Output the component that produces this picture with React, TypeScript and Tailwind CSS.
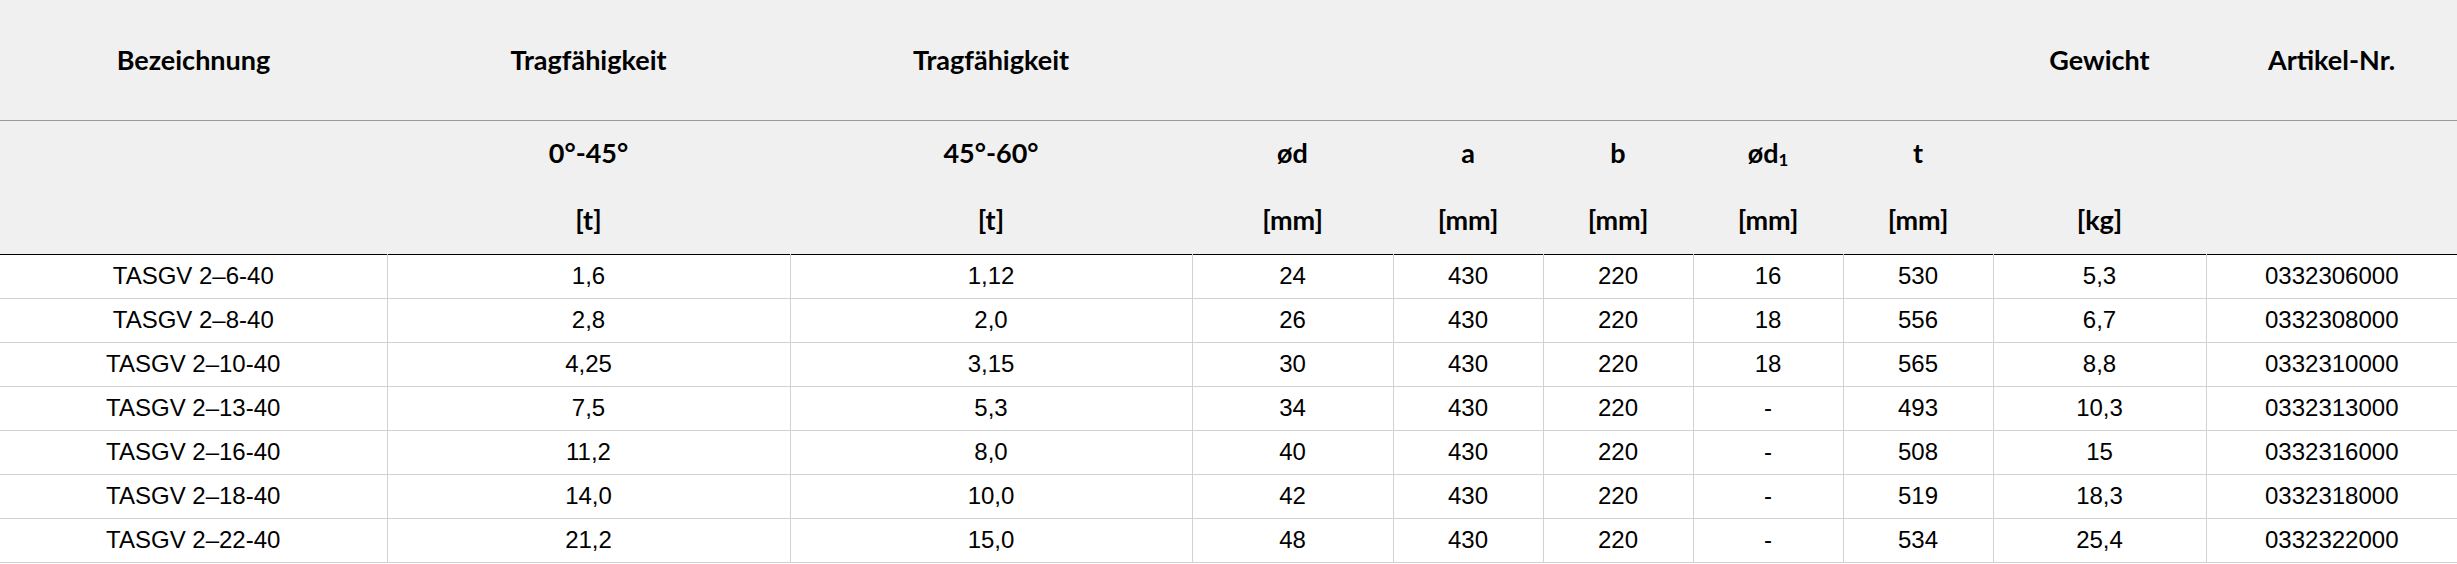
const cols = [387, 403, 402, 201, 150, 150, 150, 150, 213, 251]

const rows: string[][] = [
  ['TASGV 2–6-40', '1,6', '1,12', '24', '430', '220', '16', '530', '5,3', '0332306000'],
  ['TASGV 2–8-40', '2,8', '2,0', '26', '430', '220', '18', '556', '6,7', '0332308000'],
  ['TASGV 2–10-40', '4,25', '3,15', '30', '430', '220', '18', '565', '8,8', '0332310000'],
  ['TASGV 2–13-40', '7,5', '5,3', '34', '430', '220', '-', '493', '10,3', '0332313000'],
  ['TASGV 2–16-40', '11,2', '8,0', '40', '430', '220', '-', '508', '15', '0332316000'],
  ['TASGV 2–18-40', '14,0', '10,0', '42', '430', '220', '-', '519', '18,3', '0332318000'],
  ['TASGV 2–22-40', '21,2', '15,0', '48', '430', '220', '-', '534', '25,4', '0332322000'],
]

const top = ['Bezeichnung', 'Tragfähigkeit', 'Tragfähigkeit', '', '', '', '', '', 'Gewicht', 'Artikel-Nr.']

const sub: { name: React.ReactNode; unit: string }[] = [
  { name: '', unit: '' },
  { name: '0°-45°', unit: '[t]' },
  { name: '45°-60°', unit: '[t]' },
  { name: 'ød', unit: '[mm]' },
  { name: 'a', unit: '[mm]' },
  { name: 'b', unit: '[mm]' },
  { name: <>ød<sub className="text-[17px] relative top-[3px] align-baseline">1</sub></>, unit: '[mm]' },
  { name: 't', unit: '[mm]' },
  { name: '', unit: '[kg]' },
  { name: '', unit: '' },
]

const head = "font-['Lato','Open_Sans',sans-serif] font-bold text-[27px] text-black"
const body = "font-['Liberation_Sans',Arial,sans-serif] text-[24px] text-black"

export default function App() {
  return (
    <div className="w-[2457px] h-[564px] bg-white overflow-hidden">
      <table className="w-full border-collapse table-fixed">
        <colgroup>
          {cols.map((w, i) => <col key={i} style={{ width: w }} />)}
        </colgroup>
        <thead>
          <tr className="bg-[#f0f0f0] border-b border-[#9a9a9a]">
            {top.map((t, i) => (
              <th key={i} className={`${head} h-[120px] p-0 text-center align-middle`}>{t}</th>
            ))}
          </tr>
          <tr className="bg-[#f0f0f0] border-b border-black">
            {sub.map((s, i) => (
              <th key={i} className={`${head} p-0 text-center align-top`}>
                <div className="h-[66px] leading-[64px]">{s.name}</div>
                <div className="h-[67px] leading-[65px]">{s.unit}</div>
              </th>
            ))}
          </tr>
        </thead>
        <tbody>
          {rows.map((r, ri) => (
            <tr key={ri} className="border-b border-[#d2d2d2]">
              {r.map((c, ci) => (
                <td
                  key={ci}
                  className={`${body} h-[44px] p-0 text-center align-middle ${ci < r.length - 1 ? 'border-r border-[#d2d2d2]' : ''}`}
                >
                  {c}
                </td>
              ))}
            </tr>
          ))}
        </tbody>
      </table>
    </div>
  )
}
